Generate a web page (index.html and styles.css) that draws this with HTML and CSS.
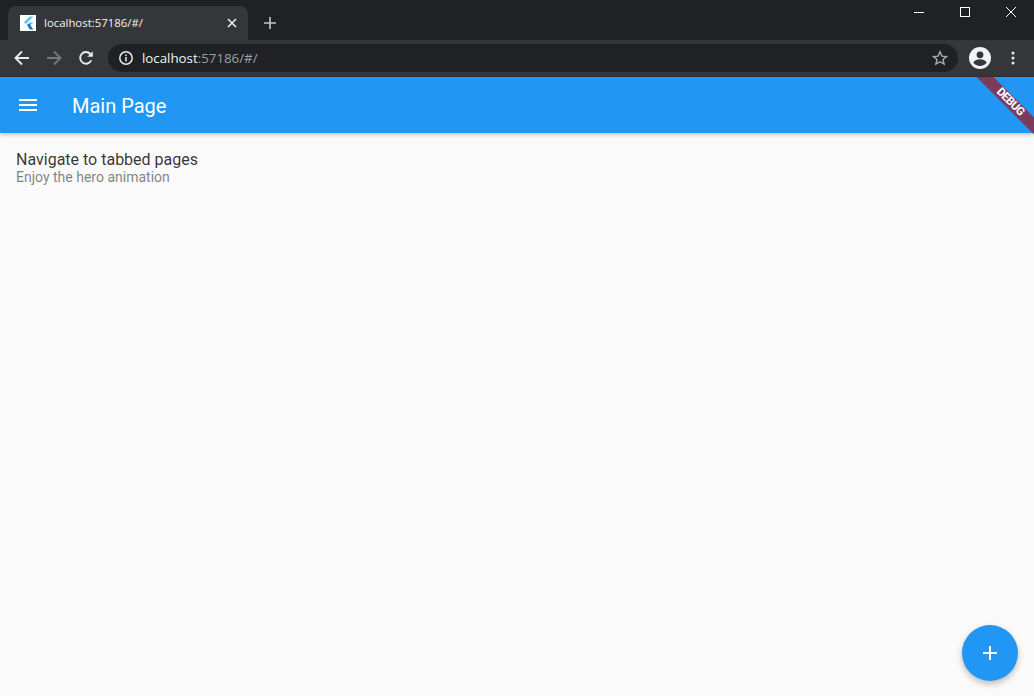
FILE: index.html
```html
<!DOCTYPE html>
<html lang="en">
<head>
<meta charset="utf-8">
<title>localhost:57186/#/</title>
<link rel="stylesheet" href="styles.css">
</head>
<body>
<div class="browser">
  <div class="tabstrip">
    <div class="tab">
      <svg class="favicon" viewBox="0 0 16 16"><rect width="16" height="16" fill="#fff"/><path d="M9.8 1.5h3.6L5.9 9 4 7.2z" fill="#54c5f8"/><path d="M9.8 7.4h3.6L9 11.8 7.1 10z" fill="#54c5f8"/><path d="M7.1 10 9 8.2 13.4 14.5H9.8z" fill="#1a73c9"/></svg>
      <span class="tab-title">localhost:57186/#/</span>
      <svg class="tab-close" viewBox="0 0 10 10"><path d="M1 1l8 8M9 1l-8 8" stroke="#e8eaed" stroke-width="1.7" fill="none"/></svg>
    </div>
    <svg class="new-tab" viewBox="0 0 12 12"><path d="M6 0v12M0 6h12" stroke="#c4c7cb" stroke-width="1.6" fill="none"/></svg>
    <div class="window-controls">
      <svg class="wc" viewBox="0 0 46 24"><path d="M18 12.5h10" stroke="#fff" fill="none"/></svg>
      <svg class="wc" viewBox="0 0 46 24"><rect x="18.5" y="7.5" width="9" height="9" stroke="#fff" fill="none"/></svg>
      <svg class="wc" viewBox="0 0 46 24"><path d="M18 7l10 10M28 7L18 17" stroke="#fff" fill="none"/></svg>
    </div>
  </div>
  <div class="toolbar">
    <svg class="nav" viewBox="0 0 16 16"><path d="M15 8H2M8 1.5 1.5 8 8 14.5" stroke="#e8eaed" stroke-width="1.9" fill="none"/></svg>
    <svg class="nav" viewBox="0 0 16 16"><path d="M1 8h13M8 1.5 14.5 8 8 14.5" stroke="#75777b" stroke-width="1.9" fill="none"/></svg>
    <svg class="nav" viewBox="0 0 16 16"><path d="M13.2 10.4A5.8 5.8 0 1 1 12.3 4" stroke="#e8eaed" stroke-width="1.9" fill="none"/><path d="M14.8 1.2v5.6H9.2z" fill="#e8eaed"/></svg>
    <div class="omnibox">
      <svg class="info" viewBox="0 0 14 14"><circle cx="7" cy="7" r="6.2" stroke="#e8eaed" stroke-width="1.5" fill="none"/><path d="M7 6v4.4M7 3.4v1.5" stroke="#e8eaed" stroke-width="1.5" fill="none"/></svg>
      <span class="url"><span class="host">localhost</span>:57186/#/</span>
      <svg class="star" viewBox="0 0 16 16"><path d="M8 1.8l1.9 4.3 4.6.4-3.5 3 1.1 4.6L8 11.7l-4.1 2.4L5 9.5l-3.5-3 4.6-.4z" stroke="#a8abaf" stroke-width="1.4" fill="none"/></svg>
    </div>
    <svg class="avatar" viewBox="0 0 22 22"><circle cx="11" cy="11" r="11" fill="#f1f3f4"/><circle cx="11" cy="7.8" r="3.4" fill="#35363a"/><path d="M4.2 15.5c1.5-2.3 4.2-3.2 6.8-3.2s5.3.9 6.8 3.2A8.6 8.6 0 0 1 11 19a8.6 8.6 0 0 1-6.8-3.5z" fill="#35363a"/></svg>
    <svg class="menu-dots" viewBox="0 0 4 14"><circle cx="2" cy="2" r="1.5" fill="#e8eaed"/><circle cx="2" cy="7" r="1.5" fill="#e8eaed"/><circle cx="2" cy="12" r="1.5" fill="#e8eaed"/></svg>
  </div>
  <div class="app">
    <header class="appbar">
      <svg class="hamburger" viewBox="0 0 18 12"><path d="M0 1h18M0 6h18M0 11h18" stroke="#fff" stroke-width="2" fill="none"/></svg>
      <h1 class="title">Main Page</h1>
    </header>
    <div class="ribbon"><span>DEBUG</span></div>
    <main class="content">
      <div class="item-title">Navigate to tabbed pages</div>
      <div class="item-sub">Enjoy the hero animation</div>
    </main>
    <button class="fab" aria-label="Add"><svg viewBox="0 0 14 14"><path d="M7 0v14M0 7h14" stroke="#fff" stroke-width="2" fill="none"/></svg></button>
  </div>
</div>
</body>
</html>
```
FILE: styles.css
```css
* { box-sizing: border-box; }
html, body { margin: 0; height: 100%; overflow: hidden; }
.browser { width: 1034px; height: 696px; display: flex; flex-direction: column; font-family: Roboto, sans-serif; background: #fafafa; }
.tabstrip { height: 40px; background: #202124; display: flex; align-items: flex-end; padding-left: 8px; position: relative; flex: none; }
.tab { width: 240px; height: 34px; background: #35363a; border-radius: 8px 8px 0 0; display: flex; align-items: center; padding-left: 12px; padding-right: 11px; }
.favicon { width: 16px; height: 16px; flex: none; }
.tab-title { font-family: "Open Sans", sans-serif; font-size: 11.4px; line-height: 14px; margin-top: -1px; color: #f1f3f4; margin-left: 8px; flex: 1; white-space: nowrap; }
.tab-close { width: 10px; height: 10px; flex: none; }
.new-tab { width: 12px; height: 12px; margin-left: 16px; margin-bottom: 11px; flex: none; }
.window-controls { position: absolute; top: 0; right: 0; display: flex; }
.wc { width: 46px; height: 24px; display: block; }
.toolbar { height: 37px; background: #35363a; border-bottom: 1px solid #2b2c2f; display: flex; align-items: center; padding-left: 14px; flex: none; }
.nav { width: 16px; height: 16px; margin-right: 16px; flex: none; }
.omnibox { width: 850px; height: 28px; margin-left: -2px; background: #202124; border-radius: 14px; display: flex; align-items: center; padding-left: 11px; padding-right: 10px; }
.info { width: 14px; height: 14px; flex: none; }
.url { font-family: "Open Sans", sans-serif; font-size: 13.3px; color: #9aa0a6; margin-left: 9px; flex: 1; }
.host { color: #f1f3f4; }
.star { width: 16px; height: 16px; flex: none; }
.avatar { width: 22px; height: 22px; margin-left: 11px; flex: none; }
.menu-dots { width: 4px; height: 14px; margin-left: 20px; flex: none; }
.app { flex: 1; position: relative; background: #fafafa; overflow: hidden; }
.appbar { height: 56px; background: #2196f3; display: flex; align-items: center; padding-left: 19px; box-shadow: 0 2px 4px rgba(0,0,0,.22); position: relative; }
.hamburger { width: 18px; height: 12px; flex: none; }
.title { margin: 2px 0 0 35px; font-size: 20px; font-weight: 450; color: #fff; }
.ribbon { position: absolute; top: 0; right: 0; width: 60px; height: 60px; overflow: hidden; }
.ribbon span { position: absolute; top: 19px; left: -9px; width: 90px; height: 12px; line-height: 10px; background: rgba(170,10,10,.65); color: #fff; font-size: 11.5px; font-weight: 700; letter-spacing: -.6px; text-align: center; transform: rotate(45deg); }
.content { padding: 18px 16px; }
.item-title { font-size: 16px; line-height: 18px; color: rgba(0,0,0,.8); }
.item-sub { font-size: 14px; line-height: 17px; color: rgba(0,0,0,.5); }
.fab { position: absolute; right: 16px; bottom: 15px; width: 56px; height: 56px; border: 0; border-radius: 50%; background: #2196f3; box-shadow: 0 3px 6px rgba(0,0,0,.25); padding: 0; display: flex; align-items: center; justify-content: center; }
.fab svg { width: 14px; height: 14px; display: block; }
```
